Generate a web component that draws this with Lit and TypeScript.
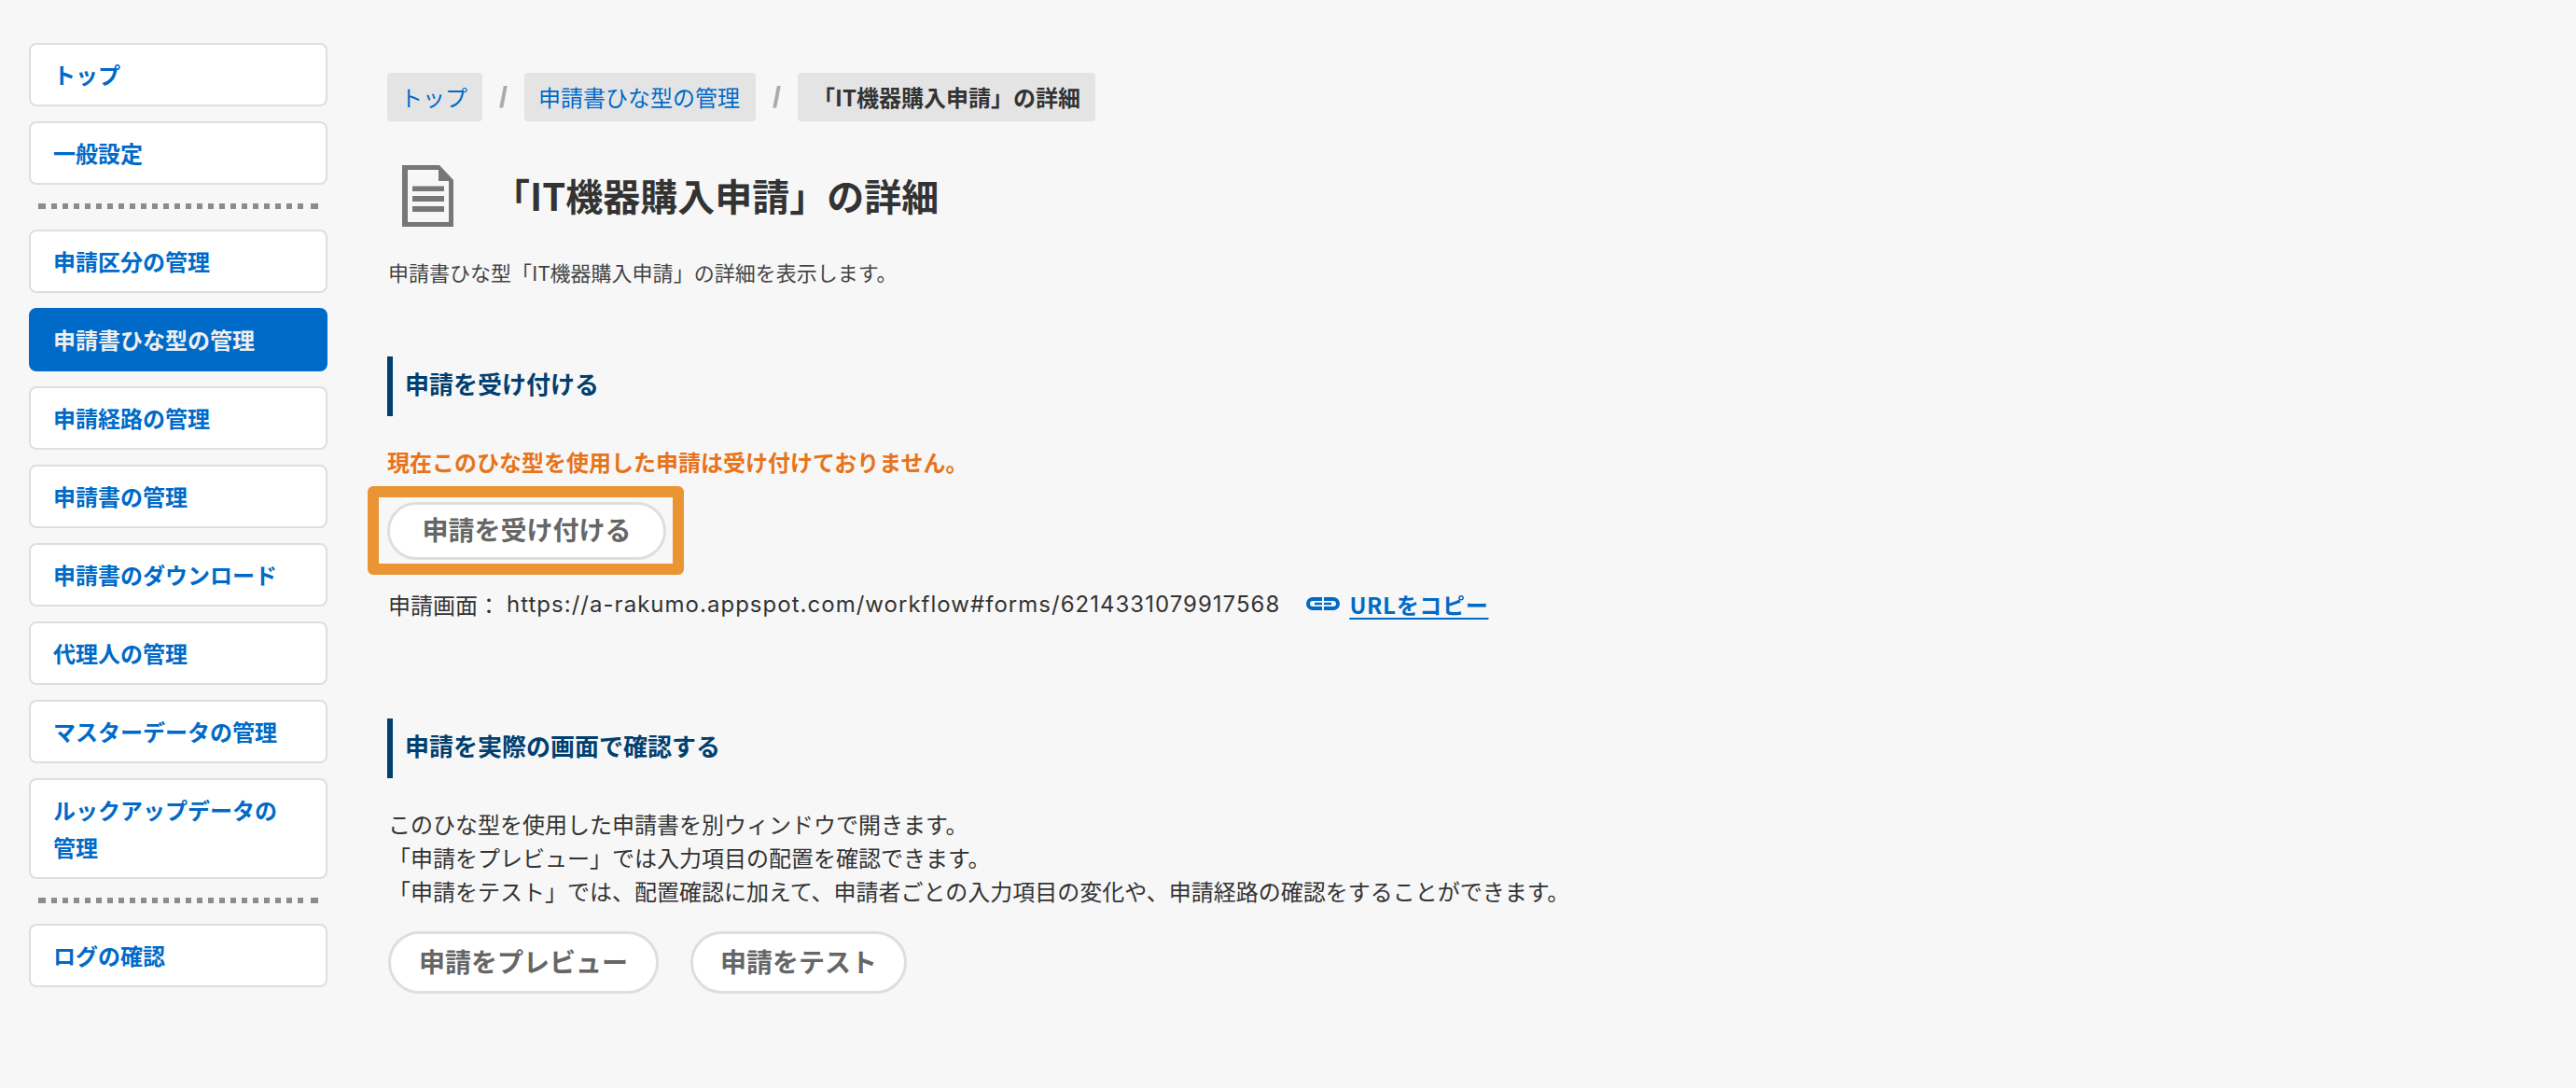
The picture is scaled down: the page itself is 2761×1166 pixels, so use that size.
import { LitElement, html, css } from "lit";
import { customElement } from "lit/decorators.js";

const NAV_A = ["トップ", "一般設定"];
const NAV_B = ["申請区分の管理", "申請書ひな型の管理", "申請経路の管理", "申請書の管理", "申請書のダウンロード", "代理人の管理", "マスターデータの管理", "ルックアップデータの管理"];
const NAV_C = ["ログの確認"];

@customElement("app-root")
export class AppRoot extends LitElement {
  static styles = css`
    :host { display: block; min-height: 1166px; background: #f7f7f7; color: #333;
      font-family: "Noto Sans CJK JP", "Liberation Sans", sans-serif; font-size: 24px; }
    * { box-sizing: border-box; }
    .page { display: flex; align-items: flex-start; }
    .side { width: 320px; margin: 46px 0 0 31px; display: flex; flex-direction: column; gap: 16px; flex: none; }
    .nav { display: block; background: #fff; border: 2px solid #dedede; border-radius: 8px; padding: 12px 25px 12px 24px;
      font-size: 24px; line-height: 40px; font-weight: 700; color: #006ac8; }
    .nav.active { background: #006ac8; border-color: #006ac8; color: #eee; }
    .nav .wrap { display: block; width: 250px; }
    .dots { height: 6px; margin: 4px 10px 6px;
      background:
        linear-gradient(#8c8c8c, #8c8c8c) left top / 8px 6px no-repeat,
        linear-gradient(#8c8c8c, #8c8c8c) right top / 8px 6px no-repeat,
        repeating-linear-gradient(90deg, #8c8c8c 0 6px, transparent 6px 12px) 14px 0 / 270px 6px no-repeat; }
    .main { margin: 78px 0 0 64px; flex: none; width: 1800px; }
    .crumbs { display: flex; align-items: center; height: 52px; font-size: 24px; }
    .crumb { height: 52px; line-height: 52px; background: #e4e4e4; border-radius: 4px; padding: 0 16px 0 14px; color: #006ac8; }
    .crumb.wide { padding: 0 17px 0 15px; }
    .crumb.cur { color: #333; font-weight: 700; padding: 0 16px; }
    .sep { width: 45px; text-align: center; color: #aaa; font-family: "Liberation Sans", sans-serif; font-size: 32px; font-weight: 700; line-height: 52px; }
    .title { display: flex; align-items: center; margin-top: 47px; height: 66px; padding-left: 16px; }
    .title svg { width: 55px; height: 66px; flex: none; }
    .title h1 { margin: 0 0 3px 42px; font-size: 40px; line-height: 62px; font-weight: 700; color: #333; }
    .desc { margin: 30px 0 0; font-size: 22px; line-height: 36px; color: #444; padding-left: 1px; }
    h2 { margin: 0; height: 64px; border-left: 6px solid #003f6f; padding-left: 13px; font-size: 26px; line-height: 58px; font-weight: 700; color: #003f6f; }
    .s1 { margin-top: 73px; }
    .warn { margin: 31px 0 0; font-size: 24px; line-height: 36px; font-weight: 700; color: #e8731a; }
    .hl { position: relative; display: inline-block; margin-top: 25px; }
    .hl::after { content: ""; position: absolute; left: -21px; top: -17px; right: -19px; bottom: -16px; border: 12px solid #eb9434; border-radius: 6px; pointer-events: none; }
    .btn { display: inline-flex; align-items: center; justify-content: center; background: #fff; border: 3px solid #dedede; border-radius: 34px;
      padding: 0 0 3px; font: 700 28px/1 "Noto Sans CJK JP", sans-serif; color: #666; }
    .b1 { width: 299px; height: 62px; vertical-align: top; padding-bottom: 5px; }
    .b2 { width: 290px; height: 67px; }
    .b3 { width: 232px; height: 67px; }
    .url { display: flex; align-items: center; margin-top: 29px; height: 36px; padding-left: 1px; font-size: 24px; color: #333; }
    .url .addr { margin-left: 7px; font-family: "Inter", "Liberation Sans", sans-serif; letter-spacing: 1.02px; }
    .url svg { width: 36px; height: 14px; margin-left: 28px; flex: none; }
    .url a { margin-left: 10px; color: #006ac8; font-weight: 700; letter-spacing: 0.7px; text-decoration: underline; text-underline-offset: 4px; }
    .s2 { margin-top: 105px; }
    .body { margin: 31px 0 0; padding-left: 1px; font-size: 24px; line-height: 36px; color: #333; }
    .acts { display: flex; gap: 34px; margin-top: 25px; padding-left: 1px; }
  `;

  private nav(label: string) {
    const wrapped = label === "ルックアップデータの管理";
    return html`<a class="nav ${label === "申請書ひな型の管理" ? "active" : ""}"><span class="${wrapped ? "wrap" : ""}">${label}</span></a>`;
  }

  render() {
    return html`<div class="page">
      <nav class="side">
        ${NAV_A.map((n) => this.nav(n))}
        <div class="dots"></div>
        ${NAV_B.map((n) => this.nav(n))}
        <div class="dots"></div>
        ${NAV_C.map((n) => this.nav(n))}
      </nav>
      <main class="main">
        <div class="crumbs">
          <a class="crumb">トップ</a><span class="sep">/</span>
          <a class="crumb wide">申請書ひな型の管理</a><span class="sep">/</span>
          <span class="crumb cur">「IT機器購入申請」の詳細</span>
        </div>
        <div class="title">
          <svg viewBox="0 0 55 66">
            <path fill="#777" fill-rule="evenodd" d="M0 0H40L55 16V66H0ZM6 5V61H50V17H39V5Z"/>
            <path fill="#777" d="M11 22.5H45V28H11ZM11 33H45V39H11ZM11 44H45V50H11Z"/>
          </svg>
          <h1>「IT機器購入申請」の詳細</h1>
        </div>
        <p class="desc">申請書ひな型「IT機器購入申請」の詳細を表示します。</p>
        <h2 class="s1">申請を受け付ける</h2>
        <p class="warn">現在このひな型を使用した申請は受け付けておりません。</p>
        <div class="hl"><button class="btn b1">申請を受け付ける</button></div>
        <div class="url">
          <span>申請画面：</span><span class="addr">https://a-rakumo.appspot.com/workflow#forms/6214331079917568</span>
          <svg viewBox="0 0 36 14" fill="none" stroke="#006ac8" stroke-width="4">
            <path d="M17 2H7a5 5 0 0 0 0 10H17"/>
            <path d="M19 2H29a5 5 0 0 1 0 10H19"/>
            <path d="M9 7H17M19 7H27" stroke-width="2.5"/>
          </svg>
          <a>URLをコピー</a>
        </div>
        <h2 class="s2">申請を実際の画面で確認する</h2>
        <p class="body">このひな型を使用した申請書を別ウィンドウで開きます。<br>「申請をプレビュー」では入力項目の配置を確認できます。<br>「申請をテスト」では、配置確認に加えて、申請者ごとの入力項目の変化や、申請経路の確認をすることができます。</p>
        <div class="acts">
          <button class="btn b2">申請をプレビュー</button>
          <button class="btn b3">申請をテスト</button>
        </div>
      </main>
    </div>`;
  }
}
